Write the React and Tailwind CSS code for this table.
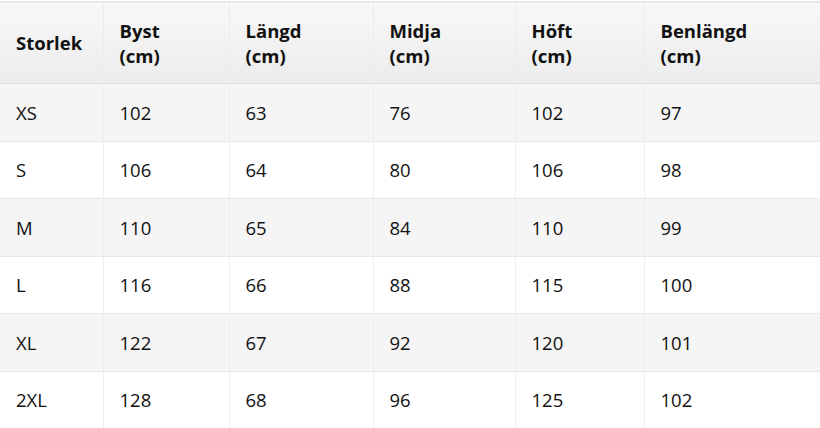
import React from "react";

const cols = [
  { label: ["Storlek"], w: "w-[103px]" },
  { label: ["Byst", "(cm)"], w: "w-[126px]" },
  { label: ["Längd", "(cm)"], w: "w-[144px]" },
  { label: ["Midja", "(cm)"], w: "w-[142px]" },
  { label: ["Höft", "(cm)"], w: "w-[129px]" },
  { label: ["Benlängd", "(cm)"], w: "w-[176px]" },
];

const rows = [
  ["XS", "102", "63", "76", "102", "97"],
  ["S", "106", "64", "80", "106", "98"],
  ["M", "110", "65", "84", "110", "99"],
  ["L", "116", "66", "88", "115", "100"],
  ["XL", "122", "67", "92", "120", "101"],
  ["2XL", "128", "68", "96", "125", "102"],
];

export default function App() {
  return (
    <div className="w-[820px] h-[428px] overflow-hidden bg-white pt-px font-['Open_Sans',sans-serif] text-[#111]">
      <table className="table-fixed border-collapse w-[820px]">
        <thead>
          <tr className="bg-gradient-to-b from-[#f8f8f8] to-[#ececec] border-t border-b border-t-[#e6e6e6] border-b-[#dcdcdc]">
            {cols.map((c, i) => (
              <th
                key={i}
                className={`${c.w} h-[82px] px-4 text-left align-middle font-bold text-[18.5px] leading-[25px] border-l border-r border-[#ececec] first:border-l-0`}
              >
                {c.label.map((l, j) => (
                  <div key={j}>{l}</div>
                ))}
              </th>
            ))}
          </tr>
        </thead>
        <tbody>
          {rows.map((r, i) => (
            <tr key={i} className={`${i % 2 === 0 ? "bg-[#f5f5f5]" : "bg-white"} border-b border-[#e8e8e8]`}>
              {r.map((v, j) => (
                <td
                  key={j}
                  className="h-[57.5px] px-4 text-[18.5px] leading-[25px] align-middle border-l border-r border-[#eeeeee] first:border-l-0"
                >
                  {v}
                </td>
              ))}
            </tr>
          ))}
        </tbody>
      </table>
    </div>
  );
}
